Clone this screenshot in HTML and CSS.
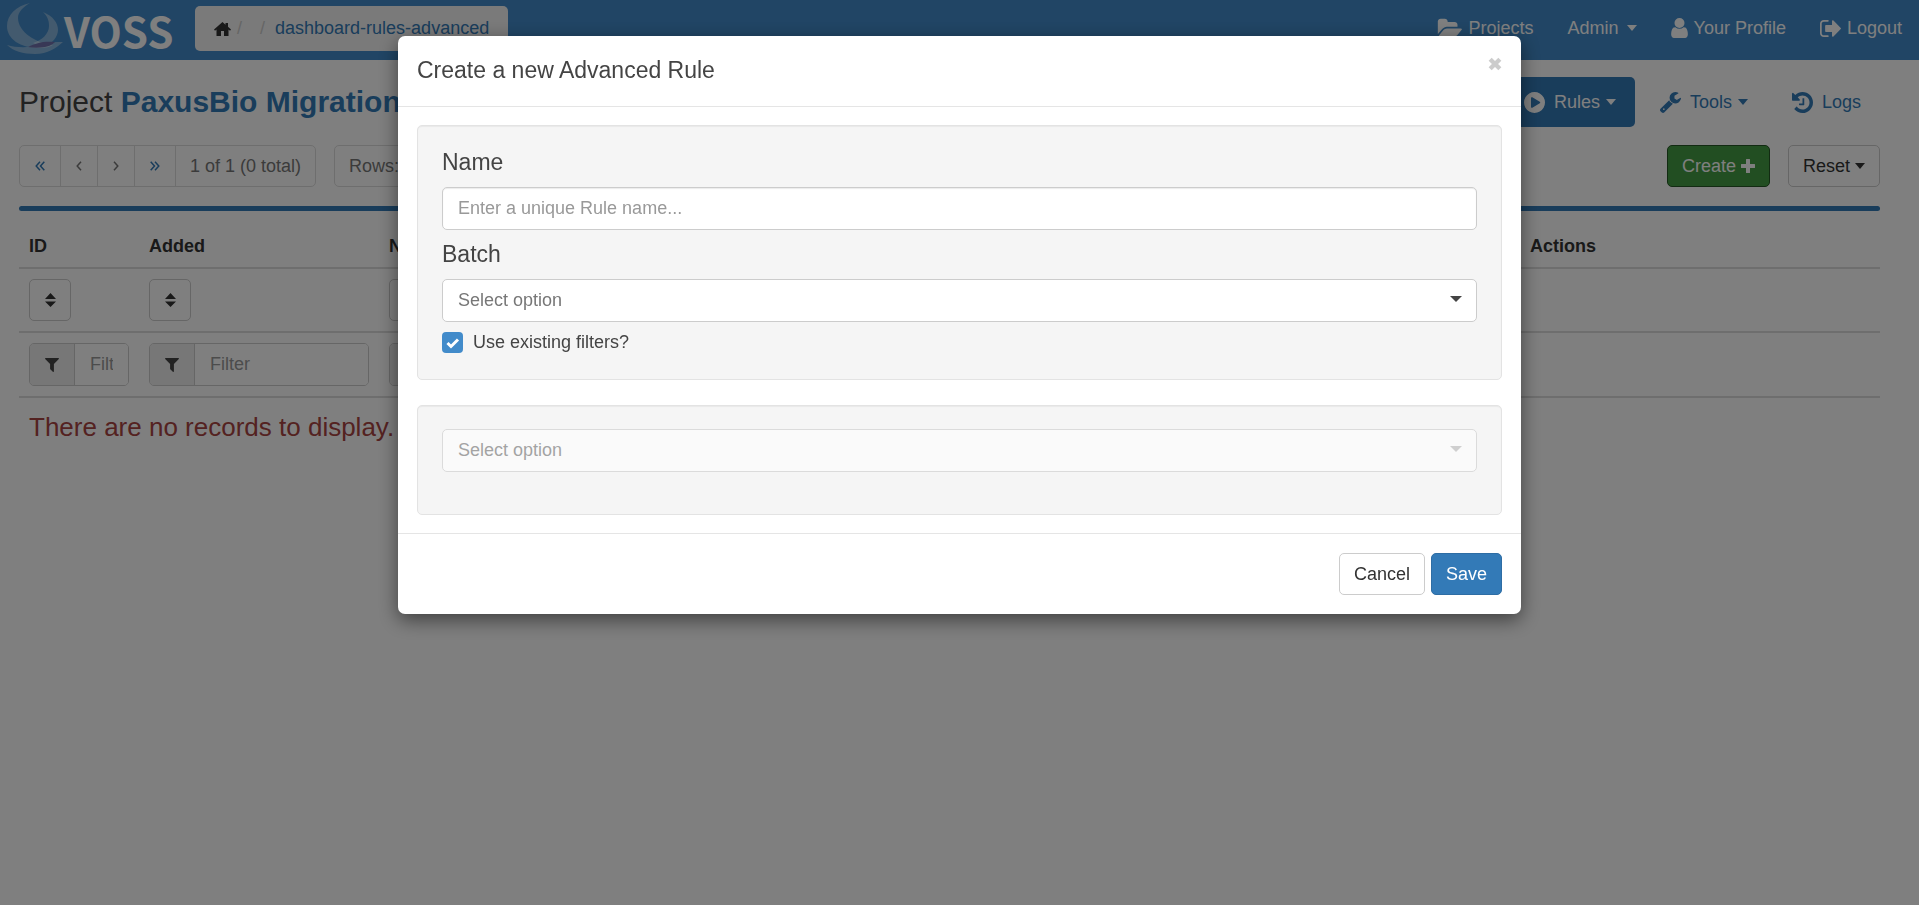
FILE: index.html
```html
<!DOCTYPE html>
<html lang="en">
  <head>
    <meta charset="UTF-8" />
    <meta name="viewport" content="width=device-width, initial-scale=1.0" />
    <title>VOSS - Advanced Rules</title>
    <link rel="stylesheet" href="styles.css">
  </head>
  <body>
    <!-- Icon set -->
    <svg class="icon-defs" aria-hidden="true">
      <symbol id="i-home" viewBox="0 0 17 14">
        <path d="M8.500 0L0 7.500l1 1.200L2.500 7.500V14h4.500V9h3v5h4.500V7.500L16 8.700l1-1.200-3-2.700V1h-2.500v1.700z" />
      </symbol>
      <symbol id="i-folder" viewBox="0 0 1952 1792">
        <path d="M1943 952q0 31-31 66l-336 396q-43 51-120.5 86.5t-143.5 35.5h-1088q-34 0-60.5-13t-26.500-43q0-31 31-66l336-396q43-51 120.5-86.5t143.5-35.500h1088q34 0 60.5 13t26.500 43zm-343-344v160h-832q-94 0-197 47.500t-164 119.500l-337 396-5 6q0-4-.5-12.500t-.5-12.500v-960q0-92 66-158t158-66h320q92 0 158 66t66 158v32h544q92 0 158 66t66 158z" />
      </symbol>
      <symbol id="i-user" viewBox="256 128 1280 1536">
        <path d="M1536 1399q0 109-62.500 187t-150.500 78h-854q-88 0-150.500-78t-62.500-187q0-85 8.500-160.500t31.500-152 58.500-131 94-89 134.500-34.500q131 128 313 128t313-128q76 0 134.500 34.500t94 89 58.500 131 31.500 152 8.500 160.500zm-256-887q0 159-112.500 271.500t-271.500 112.500-271.500-112.500-112.500-271.500 112.500-271.500 271.500-112.500 271.500 112.500 112.500 271.500z" />
      </symbol>
      <symbol id="i-logout" viewBox="64 128 1568 1536">
        <path d="M704 1440q0 4 1 20t.5 26.500-3 23.500-10 19.500-20.500 6.500h-320q-119 0-203.500-84.500t-84.500-203.500v-704q0-119 84.500-203.500t203.500-84.500h320q13 0 22.500 9.500t9.500 22.500q0 4 1 20t.5 26.500-3 23.500-10 19.500-20.500 6.500h-320q-66 0-113 47t-47 113v704q0 66 47 113t113 47h312l11.500 1 11.500 3 8 5.500 7 9 2 13.500zm928-544q0 26-19 45l-544 544q-19 19-45 19t-45-19-19-45v-288h-448q-26 0-45-19t-19-45v-384q0-26 19-45t45-19h448v-288q0-26 19-45t45-19 45 19l544 544q19 19 19 45z" />
      </symbol>
      <symbol id="i-play" viewBox="128 128 1536 1536">
        <path d="M896 128q209 0 385.500 103t279.500 279.500 103 385.500-103 385.500-279.500 279.500-385.500 103-385.500-103-279.500-279.500-103-385.500 103-385.500 279.500-279.500 385.500-103zm384 823q32-18 32-55t-32-55l-544-320q-31-19-64-1-32 19-32 56v640q0 37 32 56 16 8 32 8 17 0 32-9z" />
      </symbol>
      <symbol id="i-wrench" viewBox="85 128 1641 1643">
        <path d="M448 1472q0-26-19-45t-45-19-45 19-19 45 19 45 45 19 45-19 19-45zm644-420l-682 682q-37 37-90 37-52 0-91-37l-106-108q-38-36-38-90 0-53 38-91l681-681q39 98 114.500 173.500t173.500 114.500zm634-435q0 39-23 106-47 134-164.500 217.500t-258.500 83.500q-185 0-316.500-131.500t-131.500-316.500 131.500-316.500 316.500-131.500q58 0 121.500 16.500t107.500 46.500q16 11 16 28t-16 28l-293 169v224l193 107q5-3 79-48.500t135.500-81 70.500-35.500q15 0 23.500 10t8.500 25z" />
      </symbol>
      <symbol id="i-history" viewBox="128 128 1536 1536">
        <path d="M1664 896q0 156-61 298t-164 245-245 164-298 61q-172 0-327-72.500t-264-204.500q-7-10-6.500-22.500t8.500-20.500l137-138q10-9 25-9 16 2 23 12 73 95 179 147t225 52q104 0 198.500-40.500t163.500-109.500 109.500-163.500 40.500-198.500-40.500-198.500-109.500-163.500-163.500-109.500-198.500-40.500q-98 0-188 35.500t-160 101.500l137 138q31 30 14 69-17 40-59 40h-448q-26 0-45-19t-19-45v-448q0-42 40-59 39-17 69 14l130 129q107-101 244.500-156.500t284.500-55.500q156 0 298 61t245 164 164 245 61 298zm-640-288v448q0 14-9 23t-23 9h-320q-14 0-23-9t-9-23v-64q0-14 9-23t23-9h224v-352q0-14 9-23t23-9h64q14 0 23 9t9 23z" />
      </symbol>
      <symbol id="i-plus" viewBox="0 0 14 14">
        <path d="M5.500 0h3q.5 0 .5.500V5h4.500q.5 0 .5.500v3q0 .5-.5.500H9v4.500q0 .5-.5.500h-3q-.5 0-.5-.5V9H.5Q0 9 0 8.500v-3Q0 5 .5 5H5V.5q0-.5.5-.5z" />
      </symbol>
      <symbol id="i-filter" viewBox="192 256 1408 1408">
        <path d="M1595 295q17 41-14 70l-493 493v742q0 42-39 59-13 5-25 5-27 0-45-19l-256-256q-19-19-19-45v-486l-493-493q-31-29-14-70 17-39 59-39h1280q42 0 59 39z" />
      </symbol>
      <symbol id="i-sort" viewBox="0 0 11 14">
        <path d="M5.500 0L11 6H0zM0 8.500h11L5.500 14z" />
      </symbol>
      <symbol id="i-left" viewBox="0 0 6 10">
        <path d="M5 .700L1.200 5 5 9.300" fill="none" stroke="currentColor" stroke-width="1.500" />
      </symbol>
      <symbol id="i-right" viewBox="0 0 6 10">
        <path d="M1 .700L4.800 5 1 9.300" fill="none" stroke="currentColor" stroke-width="1.500" />
      </symbol>
      <symbol id="i-first" viewBox="0 0 10 10">
        <path d="M5 .700L1.200 5 5 9.300M9.300.700L5.500 5l3.800 4.300" fill="none" stroke="currentColor" stroke-width="1.500" />
      </symbol>
      <symbol id="i-last" viewBox="0 0 10 10">
        <path d="M.700.700L4.500 5 .700 9.300M5 .700L8.800 5 5 9.300" fill="none" stroke="currentColor" stroke-width="1.500" />
      </symbol>
    </svg>

    <nav class="navbar">
      <a class="brand" href="#">
        <svg class="brand-mark" viewBox="0 0 58 54" aria-hidden="true">
          <path class="swirl" d="M24 3C10 6 1 15 1 26c0 13 13 22 33 22 6 0 10-1 13-3C30 43 12 32 12 18c0-6 5-11 12-15z" />
          <path class="swirl" d="M37 12c10 4 15 11 15 18 0 7-6 13-13 17-4-1-8-2-12-4 9-3 16-9 16-17 0-6-2-10-6-14z" />
          <path class="swirl" d="M1 45c10 3 22 3 32 0 8-3 16-3 24-3-7 6-15 12-28 12C17 54 7 51 1 45z" />
          <path class="swirl-cross" d="M22 47c8-4 15-6 27-5-3 3-6 4-10 5-6 1-12 1-17 0z" />
        </svg>
        <span>VOSS</span>
      </a>
      <ol class="breadcrumb">
        <li><a class="home" href="#" aria-label="Home"><svg class="icon-home"><use href="#i-home" /></svg></a></li>
        <li></li>
        <li><a href="#">dashboard-rules-advanced</a></li>
      </ol>
      <div class="nav-links">
        <a href="#"><svg class="icon-folder"><use href="#i-folder" /></svg>Projects</a>
        <a href="#">Admin <i class="caret"></i></a>
        <a href="#"><svg class="icon-user"><use href="#i-user" /></svg>Your Profile</a>
        <a href="#"><svg class="icon"><use href="#i-logout" /></svg>Logout</a>
      </div>
    </nav>

    <main class="page">
      <header class="project-header">
        <h1>Project <a href="#">PaxusBio Migration</a></h1>
        <div class="pills">
          <a class="active" href="#"><svg class="icon"><use href="#i-play" /></svg>Rules <i class="caret"></i></a>
          <a href="#"><svg class="icon"><use href="#i-wrench" /></svg>Tools <i class="caret"></i></a>
          <a href="#"><svg class="icon"><use href="#i-history" /></svg>Logs</a>
        </div>
      </header>

      <div class="toolbar">
        <div class="pager">
          <button class="link" aria-label="First page"><svg class="icon-double"><use href="#i-first" /></svg></button>
          <button aria-label="Previous page"><svg class="icon-angle"><use href="#i-left" /></svg></button>
          <button aria-label="Next page"><svg class="icon-angle"><use href="#i-right" /></svg></button>
          <button class="link" aria-label="Last page"><svg class="icon-double"><use href="#i-last" /></svg></button>
          <span>1 of 1 (0 total)</span>
        </div>
        <div class="pager"><span>Rows: 10</span></div>
        <div class="actions">
          <button class="btn btn-success">Create <svg class="icon-plus"><use href="#i-plus" /></svg></button>
          <button class="btn">Reset <i class="caret"></i></button>
        </div>
      </div>

      <div class="divider"></div>

      <table class="records">
        <colgroup>
          <col class="col-id" />
          <col class="col-added" />
          <col />
          <col class="col-actions" />
        </colgroup>
        <thead>
          <tr>
            <th>ID</th>
            <th>Added</th>
            <th>Name</th>
            <th>Actions</th>
          </tr>
          <tr>
            <td><button class="btn btn-sort" aria-label="Sort by ID"><svg class="icon-sort"><use href="#i-sort" /></svg></button></td>
            <td><button class="btn btn-sort" aria-label="Sort by Added"><svg class="icon-sort"><use href="#i-sort" /></svg></button></td>
            <td><button class="btn btn-sort" aria-label="Sort by Name"><svg class="icon-sort"><use href="#i-sort" /></svg></button></td>
            <td></td>
          </tr>
          <tr>
            <td><label class="filter"><span><svg class="icon-filter"><use href="#i-filter" /></svg></span><input type="text" placeholder="Filter" aria-label="Filter ID" /></label></td>
            <td><label class="filter"><span><svg class="icon-filter"><use href="#i-filter" /></svg></span><input type="text" placeholder="Filter" aria-label="Filter Added" /></label></td>
            <td><label class="filter"><span><svg class="icon-filter"><use href="#i-filter" /></svg></span><input type="text" placeholder="Filter" aria-label="Filter Name" /></label></td>
            <td></td>
          </tr>
        </thead>
        <tbody>
          <tr>
            <td class="empty" colspan="4">There are no records to display.</td>
          </tr>
        </tbody>
      </table>
    </main>

    <div class="backdrop">
      <form class="modal" role="dialog" aria-labelledby="modalTitle">
        <header class="modal-header">
          <h2 id="modalTitle">Create a new Advanced Rule</h2>
          <button type="button" class="close" aria-label="Close">
            <svg viewBox="0 0 13 13"><path d="M2 2l9 9M11 2l-9 9" /></svg>
          </button>
        </header>

        <div class="modal-body">
          <section class="well">
            <label class="field-label" for="ruleName">Name</label>
            <input class="control" type="text" id="ruleName" placeholder="Enter a unique Rule name..." />
            <label class="field-label" for="batch">Batch</label>
            <div class="select">
              <select class="control" id="batch">
                <option>Select option</option>
              </select>
              <i class="caret"></i>
            </div>
            <label class="check">
              <span class="check-box">
                <input type="checkbox" checked />
                <svg viewBox="0 0 21 21" aria-hidden="true"><path d="M5.500 11l3.500 3.500 7-7" /></svg>
              </span>
              Use existing filters?
            </label>
          </section>

          <section class="well well-disabled">
            <div class="select disabled">
              <select class="control" aria-label="Rule" disabled>
                <option>Select option</option>
              </select>
              <i class="caret"></i>
            </div>
          </section>
        </div>

        <footer class="modal-footer">
          <button type="button" class="btn">Cancel</button>
          <button type="submit" class="btn btn-primary">Save</button>
        </footer>
      </form>
    </div>
  </body>
</html>
```
FILE: styles.css
```css
* {
  box-sizing: border-box;
}

body {
  margin: 0;
  background-color: #fff;
  color: #444;
  font-family: "Liberation Sans", Arial, sans-serif;
  font-size: 18px;
  line-height: 25px;
}

a {
  color: #337ab7;
  text-decoration: none;
}

button,
input,
select {
  font: inherit;
  color: inherit;
}

svg {
  fill: currentColor;
  flex: none;
}

.icon-defs {
  display: none;
}

.caret {
  display: inline-block;
  border-top: 6px solid;
  border-left: 5px solid transparent;
  border-right: 5px solid transparent;
  vertical-align: middle;
}

.icon {
  width: 21px;
  height: 21px;
}

.icon-home {
  display: block;
  width: 17px;
  height: 14px;
}

.icon-folder {
  width: 25px;
  height: 23px;
}

.icon-user {
  width: 17px;
  height: 20px;
}

.icon-plus,
.icon-filter {
  width: 14px;
  height: 14px;
}

.icon-sort {
  width: 11px;
  height: 14px;
}

.icon-angle {
  width: 6px;
  height: 10px;
}

.icon-double {
  width: 10px;
  height: 10px;
}

/* Top bar */
.navbar {
  display: flex;
  height: 60px;
  background-color: #428bca;
}

.brand {
  display: flex;
  width: 189px;
  padding-left: 6px;
  color: #fff;
  font-family: "Noto Sans CJK SC", "Roboto", sans-serif;
  font-size: 42px;
  font-weight: bold;
  line-height: 60px;
}

.brand-mark {
  width: 58px;
  height: 54px;
}

.swirl {
  fill: #fff;
  opacity: 0.36;
}

.swirl-cross {
  fill: #7070ac;
}

.breadcrumb {
  display: flex;
  align-items: center;
  height: 45px;
  margin: 6px 0 0 6px;
  padding: 0 19px;
  list-style: none;
  background-color: #f5f5f5;
  border-radius: 5px;
}

.breadcrumb li {
  display: flex;
  align-items: center;
}

.breadcrumb li + li::before {
  content: "/";
  padding: 0 6px;
  color: #ccc;
}

.breadcrumb li:last-child::before {
  padding: 0 10px 0 12px;
}

.home {
  color: #333;
}

.nav-links {
  display: flex;
  margin-left: auto;
}

.nav-links a {
  display: flex;
  align-items: center;
  gap: 6px;
  height: 56px;
  padding: 0 17px;
  color: #fff;
}

.nav-links .caret {
  margin-left: 2px;
}

/* Page */
.page {
  padding: 17px 39px 0 19px;
}

.project-header {
  display: flex;
  justify-content: space-between;
  height: 50px;
}

h1 {
  margin: 0;
  font-size: 30px;
  font-weight: normal;
  line-height: 50px;
}

h1 a {
  font-weight: bold;
}

.pills {
  display: flex;
  gap: 6px;
}

.pills a {
  display: flex;
  align-items: center;
  gap: 6px;
  padding: 0 19px;
  border-radius: 5px;
}

.pills .icon {
  margin-right: 3px;
}

.pills .active {
  background-color: #337ab7;
  color: #fff;
}

.toolbar {
  display: flex;
  gap: 18px;
  margin-top: 18px;
}

.pager {
  display: flex;
  height: 42px;
  border: 1px solid #ddd;
  border-radius: 5px;
  color: #777;
}

.pager button,
.pager span {
  display: flex;
  align-items: center;
  padding: 0 15px;
  border: 0;
  background: none;
  white-space: nowrap;
}

.pager span {
  padding: 0 14px;
}

.pager button + button,
.pager button + span {
  border-left: 1px solid #ddd;
}

.pager .link {
  color: #337ab7;
}

.actions {
  display: flex;
  gap: 18px;
  margin-left: auto;
}

.btn {
  display: flex;
  align-items: center;
  justify-content: center;
  gap: 5px;
  height: 42px;
  padding: 0 14px;
  border: 1px solid #ccc;
  border-radius: 5px;
  background-color: #fff;
  color: #333;
}

.btn-success {
  border-color: #255625;
  background-color: #449d44;
  color: #fff;
}

.btn-primary {
  border-color: #2e6da4;
  background-color: #337ab7;
  color: #fff;
}

.divider {
  height: 5px;
  margin-top: 19px;
  border-radius: 3px;
  background-color: #337ab7;
}

.records {
  width: 100%;
  margin-top: 9px;
  border-collapse: collapse;
  table-layout: fixed;
}

.col-id {
  width: 120px;
}

.col-added {
  width: 240px;
}

.col-actions {
  width: 360px;
}

.records th,
.records td {
  padding: 10px;
  border-bottom: 2px solid #ddd;
  text-align: left;
}

.records th {
  height: 48px;
  padding: 14px 10px 8px;
  color: #333;
}

.records .empty {
  border-bottom: 0;
  color: #a94442;
  font-size: 26px;
  line-height: 38px;
}

.btn-sort {
  width: 42px;
  padding: 0;
}

.filter {
  display: flex;
  height: 43px;
  border: 1px solid #ccc;
  border-radius: 5px;
  overflow: hidden;
}

.filter span {
  display: flex;
  align-items: center;
  padding: 0 15px;
  border-right: 1px solid #ccc;
  background-color: #eee;
}

.filter input {
  flex: 1;
  min-width: 0;
  padding: 0 15px;
  border: 0;
}

::placeholder {
  color: #999;
  opacity: 1;
}

/* Modal */
.backdrop {
  position: fixed;
  inset: 0;
  background-color: rgba(0, 0, 0, 0.5);
}

.modal {
  max-width: 1123px;
  margin: 36px auto;
  border-radius: 7px;
  background-color: #fff;
  box-shadow: 0 6px 19px rgba(0, 0, 0, 0.5);
}

.modal-header {
  display: flex;
  justify-content: space-between;
  align-items: flex-start;
  padding: 19px 19px 20px;
  border-bottom: 1px solid #e5e5e5;
}

.modal-header h2 {
  margin: 0;
  font-size: 23px;
  font-weight: normal;
  line-height: 31px;
}

.close {
  padding: 2px 0;
  border: 0;
  background: none;
  color: #ccc;
}

.close svg {
  display: block;
  width: 14px;
  height: 14px;
  stroke: currentColor;
  stroke-width: 4;
}

.modal-body {
  padding: 18px 19px;
}

.well {
  padding: 24px;
  border: 1px solid #e3e3e3;
  border-radius: 5px;
  background-color: #f5f5f5;
  box-shadow: inset 0 1px 1px rgba(0, 0, 0, 0.05);
}

.well-disabled {
  margin-top: 25px;
  padding-top: 23px;
  padding-bottom: 42px;
}

.field-label {
  display: block;
  padding-bottom: 13px;
  font-size: 23px;
  line-height: 24px;
}

.control {
  display: block;
  width: 100%;
  height: 43px;
  padding: 0 15px;
  border: 1px solid #ccc;
  border-radius: 5px;
  background-color: #fff;
}

input.control {
  margin-bottom: 12px;
  box-shadow: inset 0 1px 1px rgba(0, 0, 0, 0.08);
}

.select {
  position: relative;
}

.select .control {
  appearance: none;
  color: #777;
  opacity: 1;
}

.select .caret {
  position: absolute;
  top: 17px;
  right: 15px;
  border-left-width: 6px;
  border-right-width: 6px;
  pointer-events: none;
}

.disabled {
  opacity: 0.65;
}

.disabled .control {
  background-color: #fcfcfc;
}

.disabled .caret {
  color: #bbb;
}

.check {
  display: flex;
  align-items: center;
  gap: 10px;
  margin-top: 8px;
}

.check-box {
  position: relative;
  width: 21px;
  height: 21px;
}

.check-box input {
  appearance: none;
  display: block;
  width: 21px;
  height: 21px;
  margin: 0;
  border-radius: 4px;
  background-color: #428bca;
}

.check-box svg {
  position: absolute;
  inset: 0;
  fill: none;
  stroke: #fff;
  stroke-width: 3;
  pointer-events: none;
}

.modal-footer {
  display: flex;
  justify-content: flex-end;
  gap: 6px;
  padding: 19px;
  border-top: 1px solid #e5e5e5;
}
```
